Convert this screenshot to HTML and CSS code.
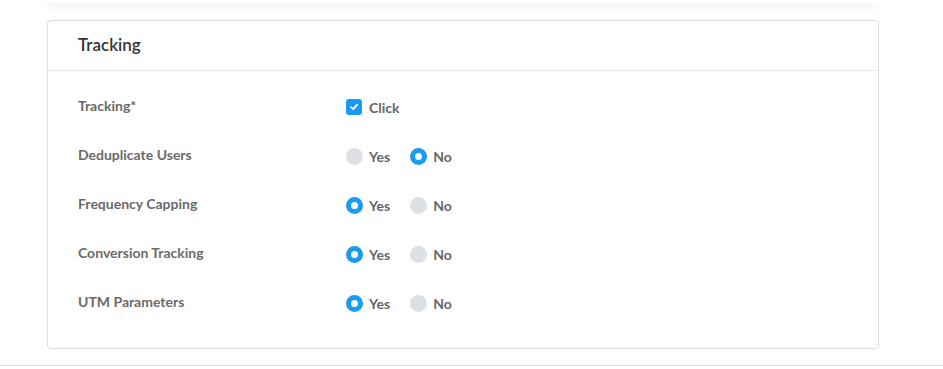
FILE: index.html
```html
<!DOCTYPE html>
<html lang="en">
<head>
<meta charset="UTF-8">
<meta name="viewport" content="width=device-width, initial-scale=1.0">
<title>Tracking</title>
<link rel="stylesheet" href="styles.css">
</head>
<body>

<div class="page">
  <div class="prev-card"></div>

  <div class="card">
    <div class="card-header">
      <h3>Tracking</h3>
    </div>
    <div class="card-body">
      <div class="row">
        <label class="row-label">Tracking*</label>
        <div class="row-control">
          <span class="option"><span class="checkbox checked"><svg width="10" height="10" viewBox="0 0 10 10"><path d="M2 5.2 L4.2 7.2 L8 2.8" fill="none" stroke="#fff" stroke-width="1.8" stroke-linecap="round" stroke-linejoin="round"/></svg></span>Click</span>
        </div>
      </div>

      <div class="row">
        <label class="row-label">Deduplicate Users</label>
        <div class="row-control">
          <span class="option"><span class="radio"></span>Yes</span>
          <span class="option"><span class="radio on"></span>No</span>
        </div>
      </div>

      <div class="row">
        <label class="row-label">Frequency Capping</label>
        <div class="row-control">
          <span class="option"><span class="radio on"></span>Yes</span>
          <span class="option"><span class="radio"></span>No</span>
        </div>
      </div>

      <div class="row">
        <label class="row-label">Conversion Tracking</label>
        <div class="row-control">
          <span class="option"><span class="radio on"></span>Yes</span>
          <span class="option"><span class="radio"></span>No</span>
        </div>
      </div>

      <div class="row">
        <label class="row-label">UTM Parameters</label>
        <div class="row-control">
          <span class="option"><span class="radio on"></span>Yes</span>
          <span class="option"><span class="radio"></span>No</span>
        </div>
      </div>
    </div>
  </div>
</div>

<div class="footer-line"></div>

</body>
</html>
```

FILE: styles.css
```css
body {
  font-family: Lato, "Open Sans", sans-serif;
  margin: 0;
  padding: 0;
  background-color: #fff;
}

.page {
  width: 832px;
  margin-left: 47px;
}

.prev-card {
  height: 3px;
  margin: 0 2px;
  background-color: #fff;
  box-shadow: 0 2px 8px rgba(0,0,0,0.14);
}

.card {
  margin-top: 17px;
  border: 1px solid #dcdcdc;
  border-radius: 4px;
  background-color: #fff;
}

.card-header {
  height: 49px;
  border-bottom: 1px solid #e8e8e8;
  padding: 0 30px;
  display: flex;
  align-items: center;
}

.card-header h3 {
  margin: 0 0 2px;
  font-size: 17px;
  font-weight: 600;
  color: #333;
}

.card-body {
  padding: 24px 30px 33px;
  display: flex;
  flex-direction: column;
  gap: 25px;
}

.row {
  display: flex;
  align-items: center;
  height: 24px;
}

.row-label {
  width: 268px;
  font-size: 14px;
  font-weight: 700;
  color: #6a6a6a;
  margin-top: -3px;
}

.row-control {
  display: flex;
  align-items: center;
  gap: 20px;
}

.option {
  display: flex;
  align-items: center;
  gap: 6px;
  font-size: 14px;
  font-weight: 700;
  color: #666;
}

.checkbox {
  width: 16px;
  height: 16px;
  border-radius: 3px;
  background-color: #ddd;
  display: flex;
  align-items: center;
  justify-content: center;
  margin-right: 1px;
}

.checkbox.checked {
  background-color: #1a9bf0;
}

.radio {
  width: 17px;
  height: 17px;
  border-radius: 50%;
  background-color: #dde0e4;
  box-sizing: border-box;
}

.radio.on {
  background-color: #fff;
  border: 5px solid #1a9bf0;
}

.footer-line {
  margin-top: 16px;
  border-top: 1px solid #dedede;
}
```
